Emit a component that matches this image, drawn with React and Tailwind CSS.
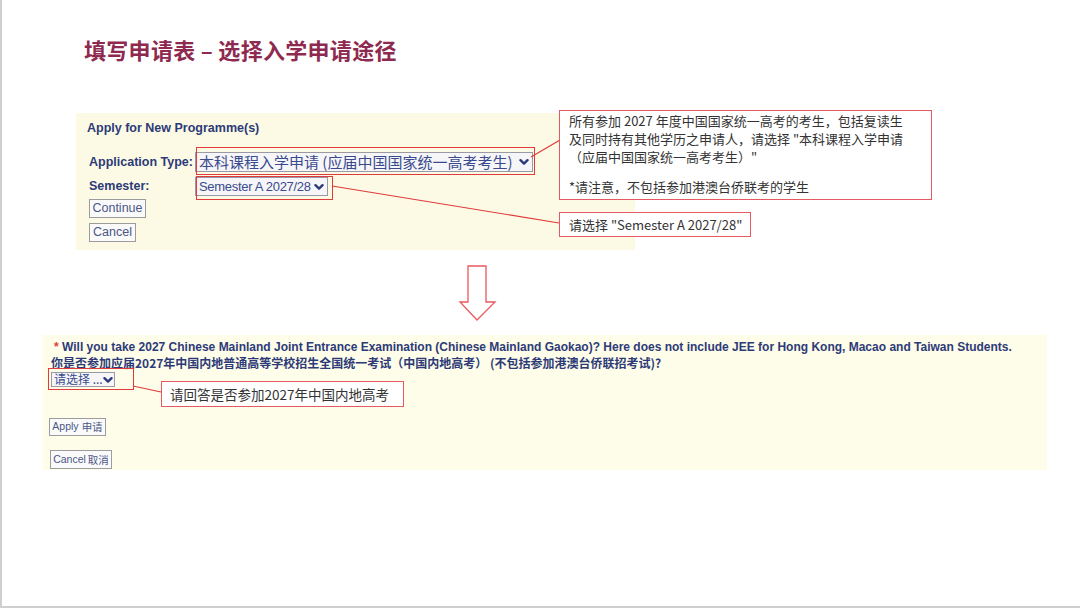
import React from 'react';

const cjk = { fontFamily: '"Noto Sans CJK SC", "Noto Sans", sans-serif' };
const arial = { fontFamily: '"Liberation Sans", "Noto Sans CJK SC", Arial, sans-serif' };

function Chevron({ size = 10 }) {
  return (
    <svg width={size} height={size} viewBox="0 0 10 10" className="shrink-0">
      <path d="M1.5 3.2 L5 6.6 L8.5 3.2" fill="none" stroke="#2c3a7c" strokeWidth="2.4" strokeLinecap="round" strokeLinejoin="round" />
    </svg>
  );
}

function FakeSelect({ children, className, textClass }) {
  return (
    <div className={`flex items-center justify-between bg-[#f6f6f8] border border-[#9a9aa6] ${className}`}>
      <span className={`whitespace-nowrap text-[#3a4a8e] ${textClass}`}>{children}</span>
      <Chevron />
    </div>
  );
}

function Btn({ children, className }) {
  return (
    <div
      className={`flex items-center justify-center bg-[#fafafa] border border-[#9c9c9c] text-[#4a5788] whitespace-nowrap ${className}`}
      style={arial}
    >
      {children}
    </div>
  );
}

export default function App() {
  return (
    <div className="relative w-[1080px] h-[608px] bg-white overflow-hidden border-l-2 border-b-2 border-[#cfcfcf]">
      {/* 标题 */}
      <h1 className="pt-[35px] pl-[82px] text-[22px] leading-[28px] font-bold text-[#8e2a4f] tracking-[0.3px]" style={cjk}>
        填写申请表 – 选择入学申请途径
      </h1>

      {/* 上方截图 */}
      <div className="mt-[50px] ml-[74px] w-[559px] h-[137px] bg-[#fcfae5] pt-[7px] pl-[11px]" style={arial}>
        <div className="text-[12.5px] leading-[16px] font-bold text-[#2d3a78]">Apply for New Programme(s)</div>
        <div className="mt-[16px] flex items-center h-[20px]">
          <div className="w-[108px] pl-[2px] text-[12.5px] font-bold text-[#2d3a78]">Application Type:</div>
          <FakeSelect className="w-[338px] h-[20px] pl-[3px] pr-[3px]" textClass="text-[15px] leading-[18px]">
            <span style={cjk}>本科课程入学申请 (应届中国国家统一高考考生)</span>
          </FakeSelect>
        </div>
        <div className="mt-[5px] flex items-center h-[19px]">
          <div className="w-[108px] pl-[2px] text-[12.5px] font-bold text-[#2d3a78]">Semester:</div>
          <FakeSelect className="w-[133px] h-[19px] pl-[3px] pr-[3px]" textClass="text-[13px] leading-[16px] tracking-[-0.3px]">
            Semester A 2027/28
          </FakeSelect>
        </div>
        <Btn className="mt-[3px] ml-[2px] w-[57px] h-[19px] text-[12.5px]">Continue</Btn>
        <Btn className="mt-[5px] ml-[2px] w-[47px] h-[19px] text-[12.5px]">Cancel</Btn>
      </div>

      {/* 下方截图 */}
      <div className="mt-[85px] ml-[41px] w-[1004px] h-[135px] bg-[#fefde9] pt-[4px]" style={arial}>
        <div className="pl-[11px] text-[12px] leading-[16px] font-bold text-[#2d3a78] whitespace-nowrap">
          <span className="text-[#e33b3b]">*</span> Will you take 2027 Chinese Mainland Joint Entrance Examination (Chinese Mainland Gaokao)? Here does not include JEE for Hong Kong, Macao and Taiwan Students.
        </div>
        <div className="pl-[8px] text-[12px] leading-[16px] font-bold text-[#2d3a78] whitespace-nowrap" style={cjk}>
          你是否参加应届2027年中国内地普通高等学校招生全国统一考试（中国内地高考） (不包括参加港澳台侨联招考试)?
        </div>
        <div className="pl-[8px] mt-[1px]">
          <FakeSelect className="w-[64px] h-[15px] pl-[2px] pr-[2px]" textClass="text-[12px] leading-[14px]">
            <span style={cjk}>请选择 ...</span>
          </FakeSelect>
        </div>
        <div className="pl-[6px] mt-[31px]">
          <Btn className="w-[57px] h-[18px] text-[10.5px]">
            Apply <span className="ml-[3px]" style={cjk}>申请</span>
          </Btn>
        </div>
        <div className="pl-[7px] mt-[14px]">
          <Btn className="w-[62px] h-[19px] text-[10.5px]">
            Cancel <span className="ml-[2px]" style={cjk}>取消</span>
          </Btn>
        </div>
      </div>

      {/* 标注：连接线和箭头 */}
      <svg className="absolute left-0 top-0 pointer-events-none" width="1080" height="608">
        <line x1="529" y1="157" x2="558" y2="140" stroke="#e03a3a" strokeWidth="1.2" />
        <line x1="330" y1="186" x2="557" y2="223" stroke="#e03a3a" strokeWidth="1.2" />
        <line x1="131" y1="386" x2="159" y2="392" stroke="#e03a3a" strokeWidth="1.2" />
        <polygon
          points="466,266 484,266 484,302 493,302 475,320 458,302 466,302"
          fill="#ffffff"
          stroke="#e8585e"
          strokeWidth="1.3"
          strokeLinejoin="miter"
        />
      </svg>

      {/* 红框 */}
      <div className="absolute left-[194px] top-[147px] w-[339px] h-[28px] border-[1.5px] border-[#e03a3a]" />
      <div className="absolute left-[194px] top-[176px] w-[137px] h-[24px] border-[1.5px] border-[#e03a3a]" />
      <div className="absolute left-[46px] top-[368px] w-[86px] h-[22px] border-[1.5px] border-[#e03a3a]" />

      {/* 说明框 */}
      <div
        className="absolute left-[557px] top-[110px] w-[373px] h-[90px] bg-white border-[1.5px] border-[#e45a60] pl-[9px] pt-[1px] text-[13px] leading-[18px] text-[#333333]"
        style={cjk}
      >
        <div>所有参加 2027 年度中国国家统一高考的考生，包括复读生</div>
        <div>及同时持有其他学历之申请人，请选择 "本科课程入学申请</div>
        <div>（应届中国国家统一高考考生）"</div>
        <div className="mt-[12px]">*请注意，不包括参加港澳台侨联考的学生</div>
      </div>
      <div
        className="absolute left-[557px] top-[212px] w-[192px] h-[25px] bg-white border-[1.5px] border-[#e45a60] pl-[9px] flex items-center text-[13px] text-[#333333]"
        style={cjk}
      >
        请选择 "Semester A 2027/28"
      </div>
      <div
        className="absolute left-[159px] top-[381px] w-[243px] h-[26px] bg-white border-[1.5px] border-[#e45a60] pl-[8px] flex items-center text-[13.5px] text-[#333333]"
        style={cjk}
      >
        请回答是否参加2027年中国内地高考
      </div>
    </div>
  );
}
